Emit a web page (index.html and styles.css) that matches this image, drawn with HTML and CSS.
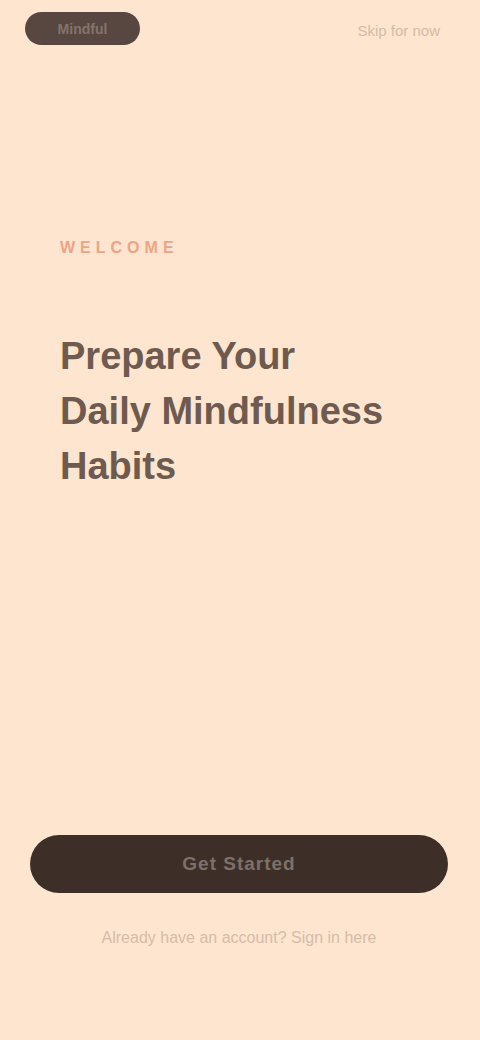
FILE: index.html
```html
<!DOCTYPE html>
<html lang="en">
<head>
<meta charset="utf-8">
<title>Welcome</title>
<link rel="stylesheet" href="styles.css">
</head>
<body>
<div class="page">
  <header class="topbar">
    <div class="brand">Mindful</div>
    <a class="skip" href="#">Skip for now</a>
  </header>
  <main class="hero">
    <div class="eyebrow">WELCOME</div>
    <h1 class="title">Prepare Your<br>Daily Mindfulness<br>Habits</h1>
  </main>
  <footer class="actions">
    <button class="cta">Get Started</button>
    <p class="note">Already have an account? Sign in here</p>
  </footer>
</div>
</body>
</html>
```

FILE: styles.css
```css
* { box-sizing: border-box; }
html, body {
  margin: 0;
  padding: 0;
  background: #fde5cf;
  font-family: "Liberation Sans", Arial, sans-serif;
}
.page {
  height: 1040px;
  display: flex;
  flex-direction: column;
}
.topbar {
  display: flex;
  justify-content: space-between;
  align-items: center;
  padding: 12px 40px 0 25px;
}
.brand {
  width: 115px;
  height: 33px;
  border-radius: 17px;
  background: #574740;
  color: #85736a;
  font-size: 14px;
  font-weight: 700;
  display: flex;
  align-items: center;
  justify-content: center;
}
.skip {
  margin-top: 4px;
  color: #d4baa6;
  font-size: 15px;
  text-decoration: none;
}
.hero {
  padding: 194px 40px 0 60px;
  flex: 1;
}
.eyebrow {
  color: #eea486;
  font-size: 16px;
  font-weight: 700;
  letter-spacing: 5px;
}
.title {
  margin: 72px 0 0;
  color: #6e5a4e;
  font-size: 38px;
  font-weight: 700;
  line-height: 55px;
}
.actions {
  padding: 0 32px 93px 30px;
  display: flex;
  flex-direction: column;
  align-items: center;
}
.cta {
  width: 418px;
  height: 58px;
  border: 0;
  border-radius: 29px;
  background: #3d2f28;
  color: #7d706a;
  font-family: "Liberation Sans", Arial, sans-serif;
  font-size: 19px;
  font-weight: 700;
  letter-spacing: 1px;
}
.note {
  margin: 36px 0 0;
  color: #d6bca8;
  font-size: 16px;
}
```
